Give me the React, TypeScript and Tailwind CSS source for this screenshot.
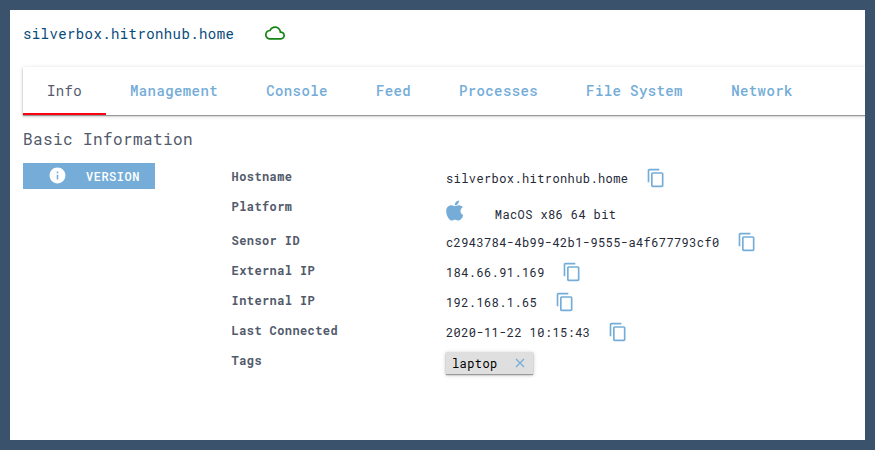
import React from "react";

const tabs = [
  { name: "Info", width: "w-[83px]" },
  { name: "Management", width: "w-[136px]" },
  { name: "Console", width: "w-[110px]" },
  { name: "Feed", width: "w-[83px]" },
  { name: "Processes", width: "w-[127px]" },
  { name: "File System", width: "w-[145px]" },
  { name: "Network", width: "w-[110px]" },
];

function CopyIcon() {
  return (
    <svg viewBox="0 0 24 24" className="ml-[17.5px] size-5 shrink-0 fill-[#75add8]">
      <path d="M16 1H4c-1.1 0-2 .9-2 2v14h2V3h12V1zm3 4H8c-1.1 0-2 .9-2 2v14c0 1.1.9 2 2 2h11c1.1 0 2-.9 2-2V7c0-1.1-.9-2-2-2zm0 16H8V7h11v14z" />
    </svg>
  );
}

function Row({ label, children, tall = false }: { label: string; children: React.ReactNode; tall?: boolean }) {
  return (
    <div className={tall ? "flex h-[34px]" : "flex h-[30px]"}>
      <dt className="w-[214.4px] shrink-0 pt-[3px] text-[12px] leading-5 font-bold tracking-[0.4px] text-[#525a6b]">{label}</dt>
      <dd className="flex items-start text-[12px] leading-5 tracking-[0.4px] whitespace-pre text-[#262a38]">{children}</dd>
    </div>
  );
}

function CopyValue({ value }: { value: string }) {
  return (
    <span className="flex items-start pt-[5px]">
      <span>{value}</span>
      <CopyIcon />
    </span>
  );
}

export default function App() {
  return (
    <div className="h-[450px] w-[875px] bg-[#3b526c] p-[10px] font-['Roboto_Mono','DejaVu_Sans_Mono',monospace]">
      <main className="h-[430px] overflow-hidden bg-white pl-[13px]">
        <header className="flex h-[57px] items-center pb-[11px]">
          <h1 className="w-[242px] text-[14px] tracking-[0.4px] text-[#074a7c]">silverbox.hitronhub.home</h1>
          <svg viewBox="0 0 24 24" className="size-5 fill-[#148414]">
            <path d="M19.35 10.04C18.67 6.59 15.64 4 12 4 9.11 4 6.6 5.64 5.35 8.04 2.34 8.36 0 10.91 0 14c0 3.31 2.69 6 6 6h13c2.76 0 5-2.24 5-5 0-2.64-2.05-4.78-4.65-4.96zM19 18H6c-2.21 0-4-1.79-4-4s1.79-4 4-4h.71C7.37 7.69 9.48 6 12 6c3.04 0 5.5 2.46 5.5 5.5v.5H19c1.66 0 3 1.34 3 3s-1.34 3-3 3z" />
          </svg>
        </header>
        <nav className="flex h-[48px] w-[860px] shadow-[0_1px_1px_#999,0_1px_4px_#0003]">
          {tabs.map((tab, i) => (
            <button
              key={tab.name}
              className={`${tab.width} h-12 border-b-2 text-[14px] tracking-[0.4px] ${i === 0 ? "border-[#ff0010] font-normal text-[#525a6b]" : "border-transparent font-medium text-[#75add8]"}`}
            >
              {tab.name}
            </button>
          ))}
        </nav>
        <h2 className="pt-[12px] text-[16px] leading-6 tracking-[0.4px] text-[#525a6b]">Basic Information</h2>
        <div className="mt-3 flex">
          <button className="flex h-[26px] w-[132px] items-center bg-[#75add8] pl-[24.5px] text-[12px] font-medium tracking-[0.5px] text-white">
            <svg viewBox="0 0 24 24" className="mr-[19.5px] mb-px size-[19px] fill-white">
              <path d="M12 2C6.48 2 2 6.48 2 12s4.48 10 10 10 10-4.48 10-10S17.52 2 12 2zm1 15h-2v-6h2v6zm0-8h-2V7h2v2z" />
            </svg>
            VERSION
          </button>
          <dl className="ml-[76.6px]">
            <Row label="Hostname"><CopyValue value="silverbox.hitronhub.home" /></Row>
            <Row label="Platform" tall>
              <svg viewBox="0 0 384 512" preserveAspectRatio="none" className="mt-[5.5px] h-[23px] w-[17.5px] fill-[#75add8]">
                <path d="M318.7 268.7c-.2-36.7 16.4-64.4 50-84.8-18.8-26.9-47.2-41.7-84.7-44.6-35.5-2.8-74.3 20.7-88.5 20.7-15 0-49.4-19.7-76.4-19.7C63.3 141.2 4 184.8 4 273.5q0 39.3 14.4 81.2c12.8 36.7 59 126.7 107.2 125.2 25.2-.6 43-17.9 75.8-17.9 31.8 0 48.3 17.9 76.4 17.9 48.6-.7 90.4-82.5 102.6-119.3-65.2-30.7-61.7-90-61.7-91.9zm-56.6-164.2c27.3-32.4 24.8-61.9 24-72.5-24.1 1.4-52 16.4-67.9 34.9-17.5 19.8-27.8 44.3-25.6 71.9 26.1 2 49.9-11.4 69.5-34.3z" />
              </svg>
              <span className="pt-[11px] pl-[31.3px]">MacOS x86 64 bit</span>
            </Row>
            <Row label="Sensor ID"><CopyValue value="c2943784-4b99-42b1-9555-a4f677793cf0" /></Row>
            <Row label="External IP"><CopyValue value="184.66.91.169" /></Row>
            <Row label="Internal IP"><CopyValue value="192.168.1.65" /></Row>
            <Row label="Last Connected"><CopyValue value="2020-11-22 10:15:43" /></Row>
            <Row label="Tags">
              <span className="mt-[5px] flex h-[22px] w-[87px] items-center bg-[#dfdfdf] pl-[6px] text-black shadow-[0_1px_1px_#999,0_1px_4px_#0004]">
                laptop
                <svg viewBox="0 0 10 10" className="ml-[17px] size-[10px] stroke-[#75add8] stroke-[1.2]">
                  <path d="M1 1l8 8M9 1L1 9" />
                </svg>
              </span>
            </Row>
          </dl>
        </div>
      </main>
    </div>
  );
}
